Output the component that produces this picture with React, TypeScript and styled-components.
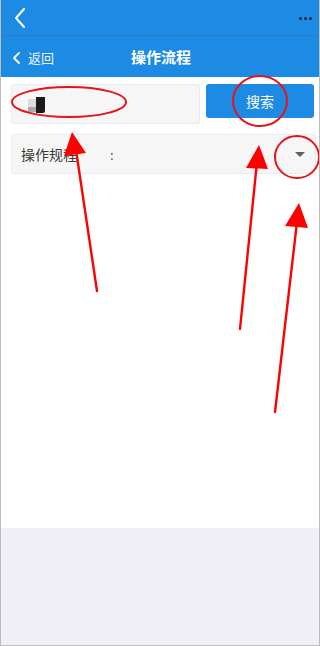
import React from 'react';
import { styled, createGlobalStyle } from 'styled-components';

const GlobalStyle = createGlobalStyle`
  html, body {
    margin: 0;
    padding: 0;
    background: #fff;
  }
  body {
    font-family: "Noto Sans CJK SC", "Noto Sans", sans-serif;
  }
`;

const App = () => {
  return (
    <Page>
      <GlobalStyle />
      <TopBar>
        <svg width="14" height="22" viewBox="0 0 14 22">
          <path d="M11 2 L3 11 L11 20" fill="none" stroke="#fff" strokeWidth="2" strokeLinecap="round" strokeLinejoin="round" />
        </svg>
        <Dots>
          <i />
          <i />
          <i />
        </Dots>
      </TopBar>
      <Header>
        <BackLink>
          <svg width="9" height="14" viewBox="0 0 9 14">
            <path d="M7 2 L2 7 L7 12" fill="none" stroke="#fff" strokeWidth="1.8" strokeLinecap="round" strokeLinejoin="round" />
          </svg>
          返回
        </BackLink>
        <Title>操作流程</Title>
      </Header>
      <Content>
        <SearchRow>
          <SearchInput>
            <svg width="20" height="18" viewBox="0 0 20 18">
              <rect x="1" y="3" width="10" height="13" fill="#dcdcdc" />
              <rect x="1" y="11" width="10" height="5" fill="#aaa" />
              <path d="M9 1 H18 V15 Q18 17 16 17 H9 Z" fill="#1b1b1b" />
            </svg>
          </SearchInput>
          <SearchButton>搜索</SearchButton>
        </SearchRow>
        <SelectRow>
          <SelectLabel>操作规程</SelectLabel>
          <Colon>:</Colon>
          <Caret />
        </SelectRow>
      </Content>
      <Footer />
      <Marks width="320" height="646" viewBox="0 0 320 646">
        <g fill="none" stroke="#e3151a" strokeWidth="2">
          <ellipse cx="69" cy="102" rx="57" ry="15" />
          <ellipse cx="260" cy="101" rx="27" ry="25" />
          <ellipse cx="297" cy="157" rx="22" ry="21" />
        </g>
        <g stroke="#f00" strokeWidth="2.4" strokeLinecap="round">
          <line x1="97" y1="291" x2="76" y2="150" />
          <line x1="240" y1="329" x2="257" y2="162" />
          <line x1="275" y1="412" x2="297" y2="222" />
        </g>
        <g fill="#f00">
          <polygon points="72,132 64,156 86,153" />
          <polygon points="259,145 246,168 268,169" />
          <polygon points="299,203 285,226 308,228" />
        </g>
      </Marks>
    </Page>
  );
};

export default App;

const Page = styled.div`
  position: relative;
  width: 320px;
  height: 646px;
  box-sizing: border-box;
  display: flex;
  flex-direction: column;
  border-left: 1px solid #bcbcbc;
  border-right: 1px solid #bcbcbc;
  border-bottom: 1px solid #c4c4c4;
  overflow: hidden;
`;

const TopBar = styled.div`
  height: 35px;
  flex-shrink: 0;
  background: #1d8be4;
  border-bottom: 1px solid #2b7cc4;
  display: flex;
  align-items: center;
  justify-content: space-between;
  padding: 0 7px 0 12px;
`;

const Dots = styled.div`
  display: flex;
  gap: 2px;
  margin-top: 2px;

  i {
    width: 3px;
    height: 3px;
    border-radius: 50%;
    background: #10243a;
  }
`;

const Header = styled.div`
  position: relative;
  height: 41px;
  flex-shrink: 0;
  background: #1d8be4;
  display: flex;
  align-items: center;
  justify-content: center;
`;

const BackLink = styled.div`
  position: absolute;
  left: 11px;
  top: 12px;
  display: flex;
  align-items: center;
  gap: 7px;
  font-size: 13px;
  color: #e8f3fd;
`;

const Title = styled.div`
  font-size: 15px;
  font-weight: 700;
  color: #fff;
  margin-left: 2px;
`;

const Content = styled.div`
  flex: 1;
  background: #fff;
  padding: 7px 4px 0 10px;
  display: flex;
  flex-direction: column;
  gap: 10px;
`;

const SearchRow = styled.div`
  display: flex;
  align-items: flex-start;
  gap: 6px;
`;

const SearchInput = styled.div`
  width: 189px;
  height: 40px;
  box-sizing: border-box;
  background: #f6f6f6;
  border: 1px solid #ececec;
  border-radius: 2px;
  display: flex;
  align-items: center;
  padding: 2px 0 0 15px;
`;

const SearchButton = styled.div`
  width: 108px;
  height: 34px;
  background: #1d8be4;
  border-radius: 3px;
  color: #fff;
  font-size: 14px;
  display: flex;
  align-items: center;
  justify-content: center;
`;

const SelectRow = styled.div`
  width: 305px;
  height: 40px;
  box-sizing: border-box;
  background: #f6f6f6;
  border: 1px solid #ececec;
  border-radius: 2px;
  display: flex;
  align-items: center;
  padding: 0 10px 0 9px;
`;

const SelectLabel = styled.span`
  font-size: 14px;
  color: #3a3a3a;
`;

const Colon = styled.span`
  margin-left: 33px;
  font-size: 13px;
  color: #555;
`;

const Caret = styled.span`
  margin-left: auto;
  width: 0;
  height: 0;
  border-left: 5px solid transparent;
  border-right: 5px solid transparent;
  border-top: 5px solid #5f5f5f;
`;

const Footer = styled.div`
  height: 117px;
  flex-shrink: 0;
  background: #f1eff6;
`;

const Marks = styled.svg`
  position: absolute;
  left: -1px;
  top: 0;
  pointer-events: none;
`;
